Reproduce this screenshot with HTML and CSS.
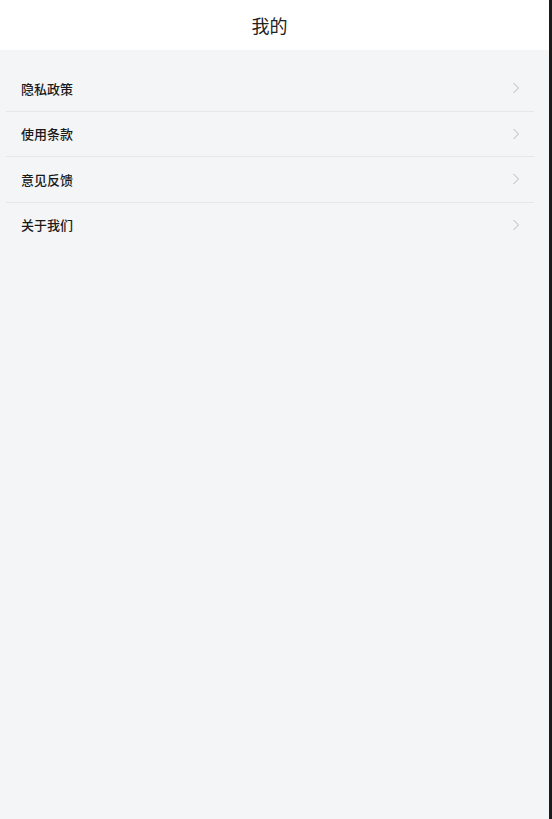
FILE: index.html
```html
<!DOCTYPE html>
<html lang="zh">
<head>
<meta charset="utf-8">
<title>我的</title>
<link rel="stylesheet" href="styles.css">
</head>
<body>
<div class="page">
  <header class="header">我的</header>
  <main class="content">
    <ul class="menu">
      <li class="item"><span class="label">隐私政策</span><svg class="chev" viewBox="0 0 8 12" width="8" height="12"><path d="M1.5 1 L6.5 6 L1.5 11" fill="none" stroke="#b8b8b8" stroke-width="1"/></svg></li>
      <li class="item"><span class="label">使用条款</span><svg class="chev" viewBox="0 0 8 12" width="8" height="12"><path d="M1.5 1 L6.5 6 L1.5 11" fill="none" stroke="#b8b8b8" stroke-width="1"/></svg></li>
      <li class="item"><span class="label">意见反馈</span><svg class="chev" viewBox="0 0 8 12" width="8" height="12"><path d="M1.5 1 L6.5 6 L1.5 11" fill="none" stroke="#b8b8b8" stroke-width="1"/></svg></li>
      <li class="item"><span class="label">关于我们</span><svg class="chev" viewBox="0 0 8 12" width="8" height="12"><path d="M1.5 1 L6.5 6 L1.5 11" fill="none" stroke="#b8b8b8" stroke-width="1"/></svg></li>
    </ul>
  </main>
</div>
</body>
</html>
```
FILE: styles.css
```css
html {
  background: #1b1b1b;
  height: 100%;
}
body {
  margin: 0;
  height: 100%;
  font-family: "Noto Sans CJK SC", "Noto Sans", sans-serif;
}
.page {
  width: 549px;
  height: 100%;
  background: #f4f5f7;
  display: flex;
  flex-direction: column;
}
.header {
  height: 50px;
  background: #ffffff;
  display: flex;
  align-items: center;
  justify-content: center;
  font-size: 18px;
  color: #222;
  padding-right: 10px;
  box-sizing: border-box;
}
.content {
  flex: 1;
  padding: 16px 15px 0 6px;
}
.menu {
  list-style: none;
  margin: 0;
  padding: 0;
}
.item {
  height: 44.5px;
  border-bottom: 1px solid #e6e7e9;
  display: flex;
  align-items: center;
  justify-content: space-between;
  padding: 0 14px 0 15px;
}
.item:last-child {
  border-bottom: none;
}
.label {
  font-size: 13px;
  color: #1a1a1a;
  font-weight: 500;
}
.chev {
  display: block;
}
```
